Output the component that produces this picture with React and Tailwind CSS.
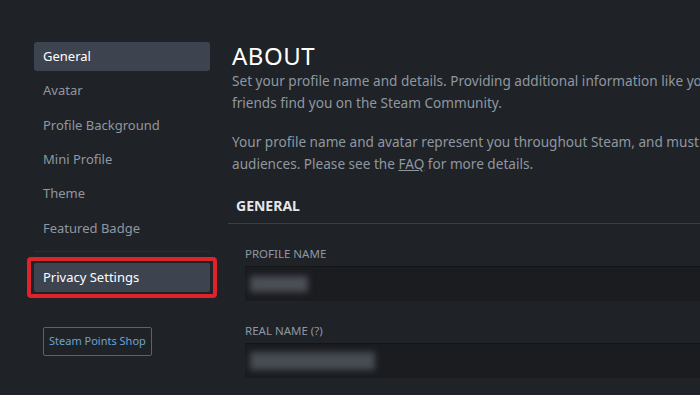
import React from "react"

const navItems = ["General", "Avatar", "Profile Background", "Mini Profile", "Theme", "Featured Badge"]

function SideItem({ label, active }) {
  return (
    <div
      className={
        "h-[29px] flex items-center px-[9px] rounded-[3px] text-[13px] " +
        (active ? "bg-[#3d4450] text-white" : "text-[#8f98a0]")
      }
    >
      {label}
    </div>
  )
}

function Field({ label, children }) {
  return (
    <div className="flex flex-col">
      <div className="text-[11.5px] text-[#8f98a0] uppercase h-[17px] leading-[17px]">{label}</div>
      <div className="mt-[4px] h-[35px] bg-[#1a1c20] border-t border-[#141518] flex items-center px-[5px]">
        {children}
      </div>
    </div>
  )
}

export default function App() {
  return (
    <div
      className="w-[700px] h-[395px] overflow-hidden bg-[#1f2227] flex"
      style={{ fontFamily: '"Noto Sans", "Open Sans", sans-serif' }}
    >
      {/* Sidebar */}
      <div className="w-[176px] ml-[34px] pt-[42px] flex flex-col shrink-0">
        <div className="flex flex-col gap-[5.4px]">
          {navItems.map((item) => (
            <SideItem key={item} label={item} active={item === "General"} />
          ))}
        </div>
        <div className="mt-[8px] h-px bg-[#2a2d33]" />
        <div className="mt-[5px] -mx-[7px] border-[4px] border-[#e0222b] rounded-[4px] px-[3px] py-[2px]">
          <div className="h-[29px] flex items-center px-[9px] rounded-[2px] bg-[#3d4450] text-white text-[13px]">
            Privacy Settings
          </div>
        </div>
        <div className="mt-[29px] ml-[9px]">
          <button className="h-[29px] px-[5px] border border-[#4a6585] rounded-[2px] text-[11px] text-[#6ea2d6]">
            Steam Points Shop
          </button>
        </div>
      </div>

      {/* Main */}
      <div className="ml-[18px] w-[660px] shrink-0 pt-[42px]">
        <div className="pl-[4px]">
          <h1 className="text-[24px] leading-[28px] text-white tracking-[0.5px]">ABOUT</h1>
          <p className="text-[13.6px] leading-[22px] text-[#8f98a0] w-[650px]">
            Set your profile name and details. Providing additional information like your real name can help
            friends find you on the Steam Community.
          </p>
          <p className="mt-[17px] text-[13.6px] leading-[22px] text-[#8f98a0] w-[650px]">
            Your profile name and avatar represent you throughout Steam, and must be appropriate for all
            audiences. Please see the <span className="underline">FAQ</span> for more details.
          </p>
        </div>

        <div className="mt-[12px]">
          <div className="h-[36px] flex items-center pl-[8px] text-[14px] font-bold text-[#e5e6e8]">GENERAL</div>
          <div className="h-px bg-[#3a3e45]" />
          <div className="pl-[17px] pt-[21px] flex flex-col gap-[21px]">
            <Field label="Profile Name">
              <div className="w-[58px] h-[16px] bg-[#4a4e55] blur-[3px]" />
            </Field>
            <Field label="Real Name (?)">
              <div className="w-[125px] h-[18px] bg-[#474b52] blur-[3px]" />
            </Field>
          </div>
        </div>
      </div>
    </div>
  )
}
